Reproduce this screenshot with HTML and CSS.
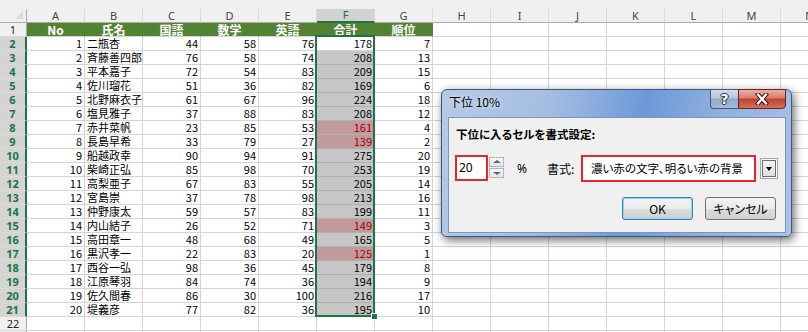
FILE: index.html
```html
<!DOCTYPE html>
<html lang="ja">
<head>
  <meta charset="UTF-8">
  <title>下位 10%</title>
  <link rel="stylesheet" href="styles.css">
</head>
<body>
<div class="topbar"></div>
<div class="sheet" id="sheet"></div>

<div class="selection"><span class="fill-handle"></span></div>

<div class="dialog">
  <div class="dlg-title">
    <span class="dlg-caption">下位 10%</span>
    <div class="caption-btns">
      <span class="cap-help">?</span>
      <span class="cap-close">
        <svg width="16" height="12" viewBox="0 0 16 12">
          <path d="M4 1.5 L12 10.5 M12 1.5 L4 10.5" stroke="#3b1511" stroke-width="4.2" stroke-linecap="square" fill="none"/>
          <path d="M4 1.5 L12 10.5 M12 1.5 L4 10.5" stroke="#fff" stroke-width="2.2" stroke-linecap="square" fill="none"/>
        </svg>
      </span>
    </div>
  </div>
  <div class="dlg-body">
    <p class="dlg-label">下位に入るセルを書式設定:</p>
    <div class="dlg-row">
      <div class="spin-input">20</div>
      <div class="spinner"><span class="spin-up"></span><span class="spin-down"></span></div>
      <span class="pct">%</span>
      <span class="fmt-label">書式:</span>
      <div class="combo">濃い赤の文字、明るい赤の背景</div>
      <span class="combo-btn"></span>
    </div>
    <div class="dlg-buttons">
      <button class="btn btn-ok">OK</button>
      <button class="btn">キャンセル</button>
    </div>
  </div>
</div>

<script>
  const data = [
    ["二瓶杏", 44, 58, 76, 178, 7],
    ["斉藤善四郎", 76, 58, 74, 208, 13],
    ["平本嘉子", 72, 54, 83, 209, 15],
    ["佐川瑠花", 51, 36, 82, 169, 6],
    ["北野麻衣子", 61, 67, 96, 224, 18],
    ["塩見雅子", 37, 88, 83, 208, 12],
    ["赤井菜帆", 23, 85, 53, 161, 4],
    ["長島早希", 33, 79, 27, 139, 2],
    ["船越政幸", 90, 94, 91, 275, 20],
    ["柴崎正弘", 85, 98, 70, 253, 19],
    ["高梨亜子", 67, 83, 55, 205, 14],
    ["宮島崇", 37, 78, 98, 213, 16],
    ["仲野康太", 59, 57, 83, 199, 11],
    ["内山結子", 26, 52, 71, 149, 3],
    ["高田章一", 48, 68, 49, 165, 5],
    ["黒沢孝一", 22, 83, 20, 125, 1],
    ["西谷一弘", 98, 36, 45, 179, 8],
    ["江原琴羽", 84, 74, 36, 194, 9],
    ["佐久間春", 86, 30, 100, 216, 17],
    ["堤義彦", 77, 82, 36, 195, 10]
  ];
  const heads = ["No", "氏名", "国語", "数学", "英語", "合計", "順位"];
  const cols = "ABCDEFGHIJKLMN".split("");
  const sheet = document.getElementById("sheet");

  // bottom 20% of the totals
  const totals = data.map(r => r[4]).sort((a, b) => a - b);
  const limit = totals[Math.ceil(totals.length * 0.2) - 1];

  function cell(cls, text) {
    const d = document.createElement("div");
    d.className = cls;
    d.textContent = text === undefined ? "" : text;
    sheet.appendChild(d);
  }

  cell("corner");
  cols.forEach(c => cell(c === "F" ? "colhead sel" : "colhead", c));

  for (let r = 1; r <= 23; r++) {
    cell(r >= 2 && r <= 21 ? "rowhead sel" : "rowhead", r);
    const row = data[r - 2];
    cols.forEach((c, i) => {
      if (r === 1 && i < 7) {
        cell("head", heads[i]);
      } else if (row && i === 0) {
        cell("num", r - 1);
      } else if (row && i === 1) {
        cell("name", row[0]);
      } else if (row && i === 5) {
        let cls = "num";
        if (r > 2) cls += " pick";
        if (row[4] <= limit) cls += " low";
        cell(cls, row[4]);
      } else if (row && i < 7) {
        cell("num", row[i - 1]);
      } else {
        cell("");
      }
    });
  }
</script>
</body>
</html>
```

FILE: styles.css
```css
* {
  box-sizing: border-box;
}

body {
  margin: 0;
  width: 808px;
  height: 332px;
  overflow: hidden;
  position: relative;
  background: #fff;
  font-family: "Noto Sans CJK JP", sans-serif;
}

.topbar {
  height: 9px;
  background: #f0f0f0;
}

/* spreadsheet */
.sheet {
  display: grid;
  grid-template-columns: 27px repeat(14, 58px);
  grid-auto-rows: 14px;
}

.sheet > div {
  border-right: 1px solid #d4d4d4;
  border-bottom: 1px solid #d4d4d4;
  font-size: 11px;
  line-height: 13px;
  color: #000;
  white-space: nowrap;
}

.sheet > .corner {
  position: relative;
  background: #f0f0f0;
  border-right-color: #ababab;
  border-bottom-color: #ababab;
}

.corner::after {
  content: "";
  position: absolute;
  right: 3px;
  bottom: 3px;
  border-left: 8px solid transparent;
  border-bottom: 8px solid #dadada;
}

.sheet > .colhead {
  background: #f0f0f0;
  border-bottom-color: #ababab;
  border-right-color: #dadada;
  font-family: "Noto Sans", sans-serif;
  color: #444;
  text-align: center;
}

.sheet > .colhead.sel {
  background: #d2d2d2;
  color: #217346;
  border-bottom: 2px solid #217346;
  line-height: 12px;
}

.sheet > .rowhead {
  background: #f0f0f0;
  border-right-color: #ababab;
  border-bottom-color: #dadada;
  font-family: "Noto Sans", sans-serif;
  color: #222;
  text-align: center;
}

.sheet > .rowhead.sel {
  background: #d4d4d4;
  color: #217346;
  font-weight: bold;
  border-right: 2px solid #217346;
}

.sheet > .head {
  background: #548235;
  border-right-color: #548235;
  color: #fff;
  font-weight: bold;
  font-size: 12px;
  text-align: center;
}

.num {
  text-align: right;
  padding-right: 2px;
}

.name {
  padding-left: 2px;
}

.sheet > .pick {
  background: #c6c6c6;
  border-bottom-color: #b0b0b0;
}

.sheet > .pick.low {
  background: #c4999d;
  color: #9c0006;
}

.selection {
  position: absolute;
  left: 315px;
  top: 35px;
  width: 60px;
  height: 282px;
  border: 2px solid #217346;
}

.fill-handle {
  position: absolute;
  right: -5px;
  bottom: -5px;
  width: 7px;
  height: 7px;
  background: #217346;
  border: 1px solid #fff;
}

/* dialog */
.dialog {
  position: absolute;
  left: 441px;
  top: 89px;
  width: 351px;
  height: 148px;
  display: flex;
  flex-direction: column;
  padding: 0 5px 3px 6px;
  border: 1px solid #3f5680;
  border-radius: 6px 6px 5px 5px;
  background: linear-gradient(100deg, #b6cae6 0%, #a3bde2 30%, #6d98d8 55%, #8fb0df 75%, #abc3e5 100%);
  box-shadow: 2px 3px 10px rgba(0, 0, 0, 0.6);
  font-feature-settings: "palt";
}

.dlg-title {
  height: 27px;
  display: flex;
  justify-content: space-between;
  align-items: flex-start;
}

.dlg-caption {
  margin: 4px 0 0 1px;
  font-size: 12px;
  line-height: 16px;
  color: #000;
  text-shadow: 0 0 5px rgba(255, 255, 255, 0.9);
}

.caption-btns {
  display: flex;
  margin-top: -1px;
}

.cap-help,
.cap-close {
  height: 20px;
  display: flex;
  align-items: center;
  justify-content: center;
  border: 1px solid #45577a;
}

.cap-help {
  width: 28px;
  border-right: none;
  border-radius: 0 0 0 4px;
  background: linear-gradient(#d0dcec, #b2c3dc 45%, #93a9c9 50%, #a6badb);
  color: #fff;
  font-family: "DejaVu Sans", sans-serif;
  font-weight: bold;
  font-size: 14px;
  text-shadow: 0 0 1px #223, 1px 0 0 #334, -1px 0 0 #334, 0 1px 0 #334, 0 -1px 0 #334;
}

.cap-close {
  width: 48px;
  border-color: #5b2a24;
  border-radius: 0 0 4px 0;
  background: linear-gradient(#eab0a6, #d77b6c 45%, #c2402f 50%, #d2705f);
}

.dlg-body {
  flex: 1;
  background: #f0f0f0;
  border: 1px solid #7d95bb;
  padding: 0 6px;
}

.dlg-label {
  margin: 8px 0 0 1px;
  font-size: 11.5px;
  line-height: 16px;
  font-weight: bold;
}

.dlg-row {
  display: flex;
  align-items: flex-start;
  margin-top: 13px;
  height: 27px;
  font-size: 12px;
}

.spin-input {
  width: 33px;
  height: 26px;
  border: 2px solid #e8262a;
  background: #fff;
  padding-left: 2px;
  font-family: "Noto Sans", sans-serif;
  line-height: 22px;
}

.spinner {
  display: flex;
  flex-direction: column;
  gap: 1px;
  margin: 2px 0 0 1px;
}

.spin-up,
.spin-down {
  position: relative;
  width: 15px;
  height: 10px;
  border: 1px solid #b5b5b5;
  background: linear-gradient(#f8f8f8, #e4e4e4);
}

.spin-up::after,
.spin-down::after {
  content: "";
  position: absolute;
  left: 3px;
  top: 2px;
  border-left: 4px solid transparent;
  border-right: 4px solid transparent;
}

.spin-up::after {
  border-bottom: 3px solid #4d6791;
}

.spin-down::after {
  top: 3px;
  border-top: 3px solid #4d6791;
}

.pct {
  width: 30px;
  margin-left: 13px;
  line-height: 27px;
  font-family: "Noto Sans", sans-serif;
}

.fmt-label {
  width: 34px;
  line-height: 27px;
}

.combo {
  width: 175px;
  height: 27px;
  border: 2px solid #e8262a;
  background: #fff;
  padding-left: 8px;
  font-size: 11.5px;
  line-height: 23px;
}

.combo-btn {
  position: relative;
  width: 18px;
  height: 21px;
  margin: 3px 0 0 4px;
  border: 1px solid #a5a5a5;
  box-shadow: inset 0 0 0 1px #fafafa, inset 0 0 0 2px #6e6e6e;
  background: linear-gradient(#f6f6f6, #dcdcdc);
}

.combo-btn::after {
  content: "";
  position: absolute;
  left: 5px;
  top: 8px;
  border-left: 3.5px solid transparent;
  border-right: 3.5px solid transparent;
  border-top: 4px solid #000;
}

.dlg-buttons {
  display: flex;
  justify-content: flex-end;
  gap: 12px;
  margin: 15px 3px 0 0;
}

.btn {
  width: 71px;
  height: 23px;
  padding: 0;
  border: 1px solid #707070;
  border-radius: 3px;
  background: linear-gradient(#f2f2f2 0%, #ebebeb 50%, #dddddd 51%, #cfcfcf 100%);
  font-family: "Noto Sans CJK JP", sans-serif;
  font-feature-settings: "palt";
  font-size: 12px;
  color: #000;
}

.btn-ok {
  border-color: #3c7fb1;
  box-shadow: inset 0 0 0 1px #8fd6f7;
}
```
